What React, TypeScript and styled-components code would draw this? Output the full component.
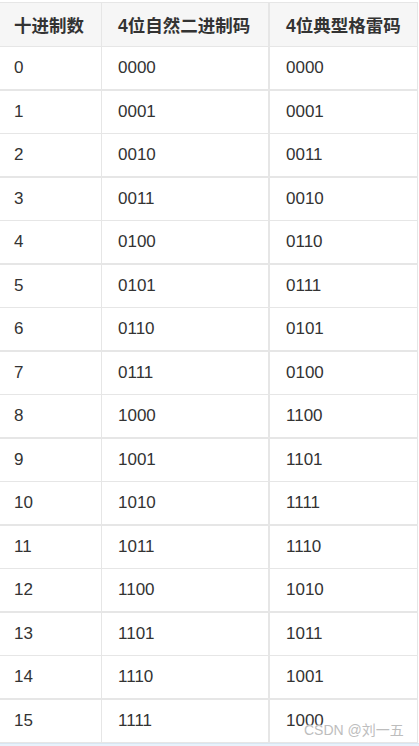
import React from "react";
import styled, { createGlobalStyle } from "styled-components";

const Global = createGlobalStyle`
  html, body { margin: 0; padding: 0; background: #ffffff; }
  body { font-family: "Liberation Sans", "Noto Sans CJK SC", sans-serif; }
`;

const Page = styled.div`
  position: relative;
  width: 419px;
  height: 746px;
  overflow: hidden;
  background: #ffffff;
  display: flex;
  flex-direction: column;
`;

const Table = styled.div`
  margin-top: 2px;
  width: 418px;
  border-top: 1px solid #e6e6e6;
  display: flex;
  flex-direction: column;
`;

const Row = styled.div<{ $head?: boolean; $thick?: boolean }>`
  display: grid;
  grid-template-columns: 102px 168px 148px;
  height: ${(p) => (p.$head ? 43 : 42)}px;
  border-bottom: ${(p) => (p.$thick ? 2 : 1)}px solid #e6e6e6;
  background: ${(p) => (p.$head ? "#f6f6f6" : "#ffffff")};
`;

const Cell = styled.div<{ $head?: boolean; $col: number }>`
  display: flex;
  align-items: center;
  padding-left: ${(p) => (p.$col === 0 ? 14 : 16)}px;
  border-right: ${(p) => (p.$col === 1 ? 2 : 1)}px solid #e6e6e6;
  font-size: ${(p) => (p.$head ? 17.5 : 17)}px;
  font-weight: ${(p) => (p.$head ? 700 : 400)};
  color: #333333;
  white-space: nowrap;
`;

const Footer = styled.div`
  flex: 1;
  background: #e8f2fb;
  border-top: 1px solid #d9e6f2;
`;

const Watermark = styled.div`
  position: absolute;
  left: 304px;
  top: 719px;
  font-size: 14px;
  color: #bdbdbd;
  text-shadow: 0 0 1px #fff, 0 0 2px #fff;
  white-space: nowrap;
`;

const rows: [string, string, string][] = [
  ["0", "0000", "0000"],
  ["1", "0001", "0001"],
  ["2", "0010", "0011"],
  ["3", "0011", "0010"],
  ["4", "0100", "0110"],
  ["5", "0101", "0111"],
  ["6", "0110", "0101"],
  ["7", "0111", "0100"],
  ["8", "1000", "1100"],
  ["9", "1001", "1101"],
  ["10", "1010", "1111"],
  ["11", "1011", "1110"],
  ["12", "1100", "1010"],
  ["13", "1101", "1011"],
  ["14", "1110", "1001"],
  ["15", "1111", "1000"],
];

export default function App() {
  return (
    <Page>
      <Global />
      <Table>
        <Row $head>
          <Cell $head $col={0}>十进制数</Cell>
          <Cell $head $col={1}>4位自然二进制码</Cell>
          <Cell $head $col={2}>4位典型格雷码</Cell>
        </Row>
        {rows.map((r, i) => (
          <Row key={i} $thick={i % 2 === 0}>
            {r.map((c, j) => (
              <Cell key={j} $col={j}>{c}</Cell>
            ))}
          </Row>
        ))}
      </Table>
      <Footer />
      <Watermark>CSDN @刘一五</Watermark>
    </Page>
  );
}
